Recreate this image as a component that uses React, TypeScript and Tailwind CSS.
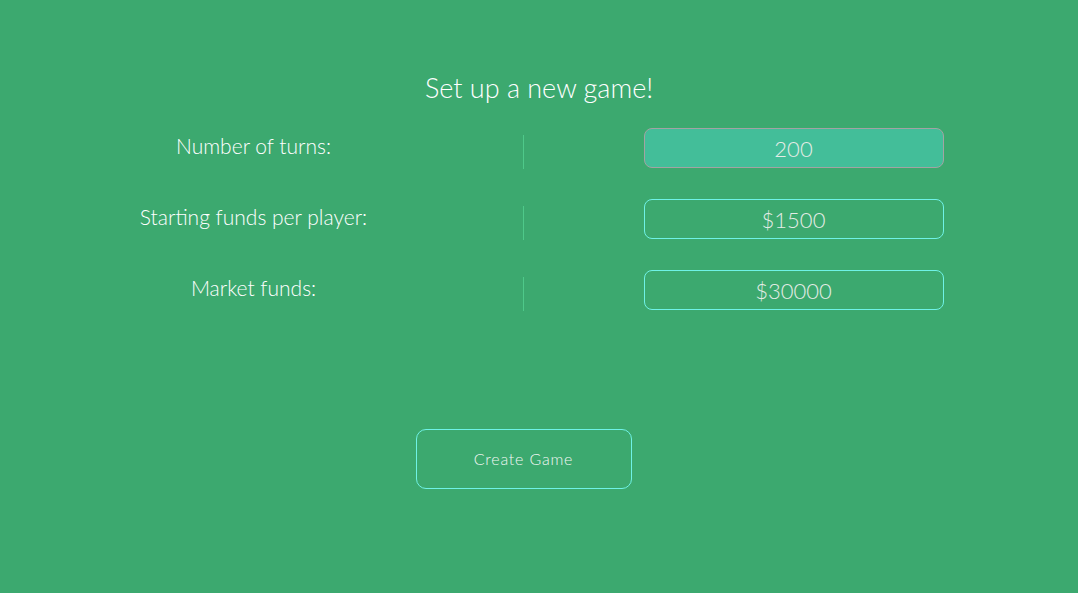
import React from 'react';

const rows = [
  { label: 'Number of turns:', value: '200', focused: true },
  { label: 'Starting funds per player:', value: '$1500', focused: false },
  { label: 'Market funds:', value: '$30000', focused: false },
];

export default function App() {
  return (
    <div
      className="min-h-screen w-full overflow-hidden bg-[#3ca96f] text-white"
      style={{ fontFamily: 'Lato, "Open Sans", sans-serif' }}
    >
      <h1 className="pt-[72px] text-center text-[27px] font-light leading-[32px]">Set up a new game!</h1>

      <div className="ml-[-16px] mt-[24px] flex w-[1079px] flex-col gap-[31px]">
        {rows.map((r) => (
          <div key={r.label} className="flex h-[40px]">
            <div className="flex flex-1 justify-center pt-[2px]">
              <span className="text-[21px] font-light leading-[32px]">{r.label}</span>
            </div>
            <div className="mt-[7px] h-[34px] w-px bg-[#4fc98a]" />
            <div className="flex flex-1 justify-center">
              <input
                readOnly
                value={r.value}
                className={`h-[40px] w-[300px] rounded-[8px] border text-center text-[22px] font-light text-[#e4ece6] outline-none ${
                  r.focused ? 'border-[#a3a3a3] bg-[#43be99]' : 'border-[#6ff2e6] bg-transparent'
                }`}
              />
            </div>
          </div>
        ))}
      </div>

      <div className="ml-[-16px] mt-[119px] flex w-[1079px] justify-center">
        <button
          className="h-[60px] w-[216px] rounded-[10px] border border-[#6ff2e6] text-[16px] font-light tracking-[0.8px] text-[#f2f7f3]"
          style={{ fontFamily: 'Lato, "Open Sans", sans-serif' }}
        >
          Create Game
        </button>
      </div>
    </div>
  );
}
